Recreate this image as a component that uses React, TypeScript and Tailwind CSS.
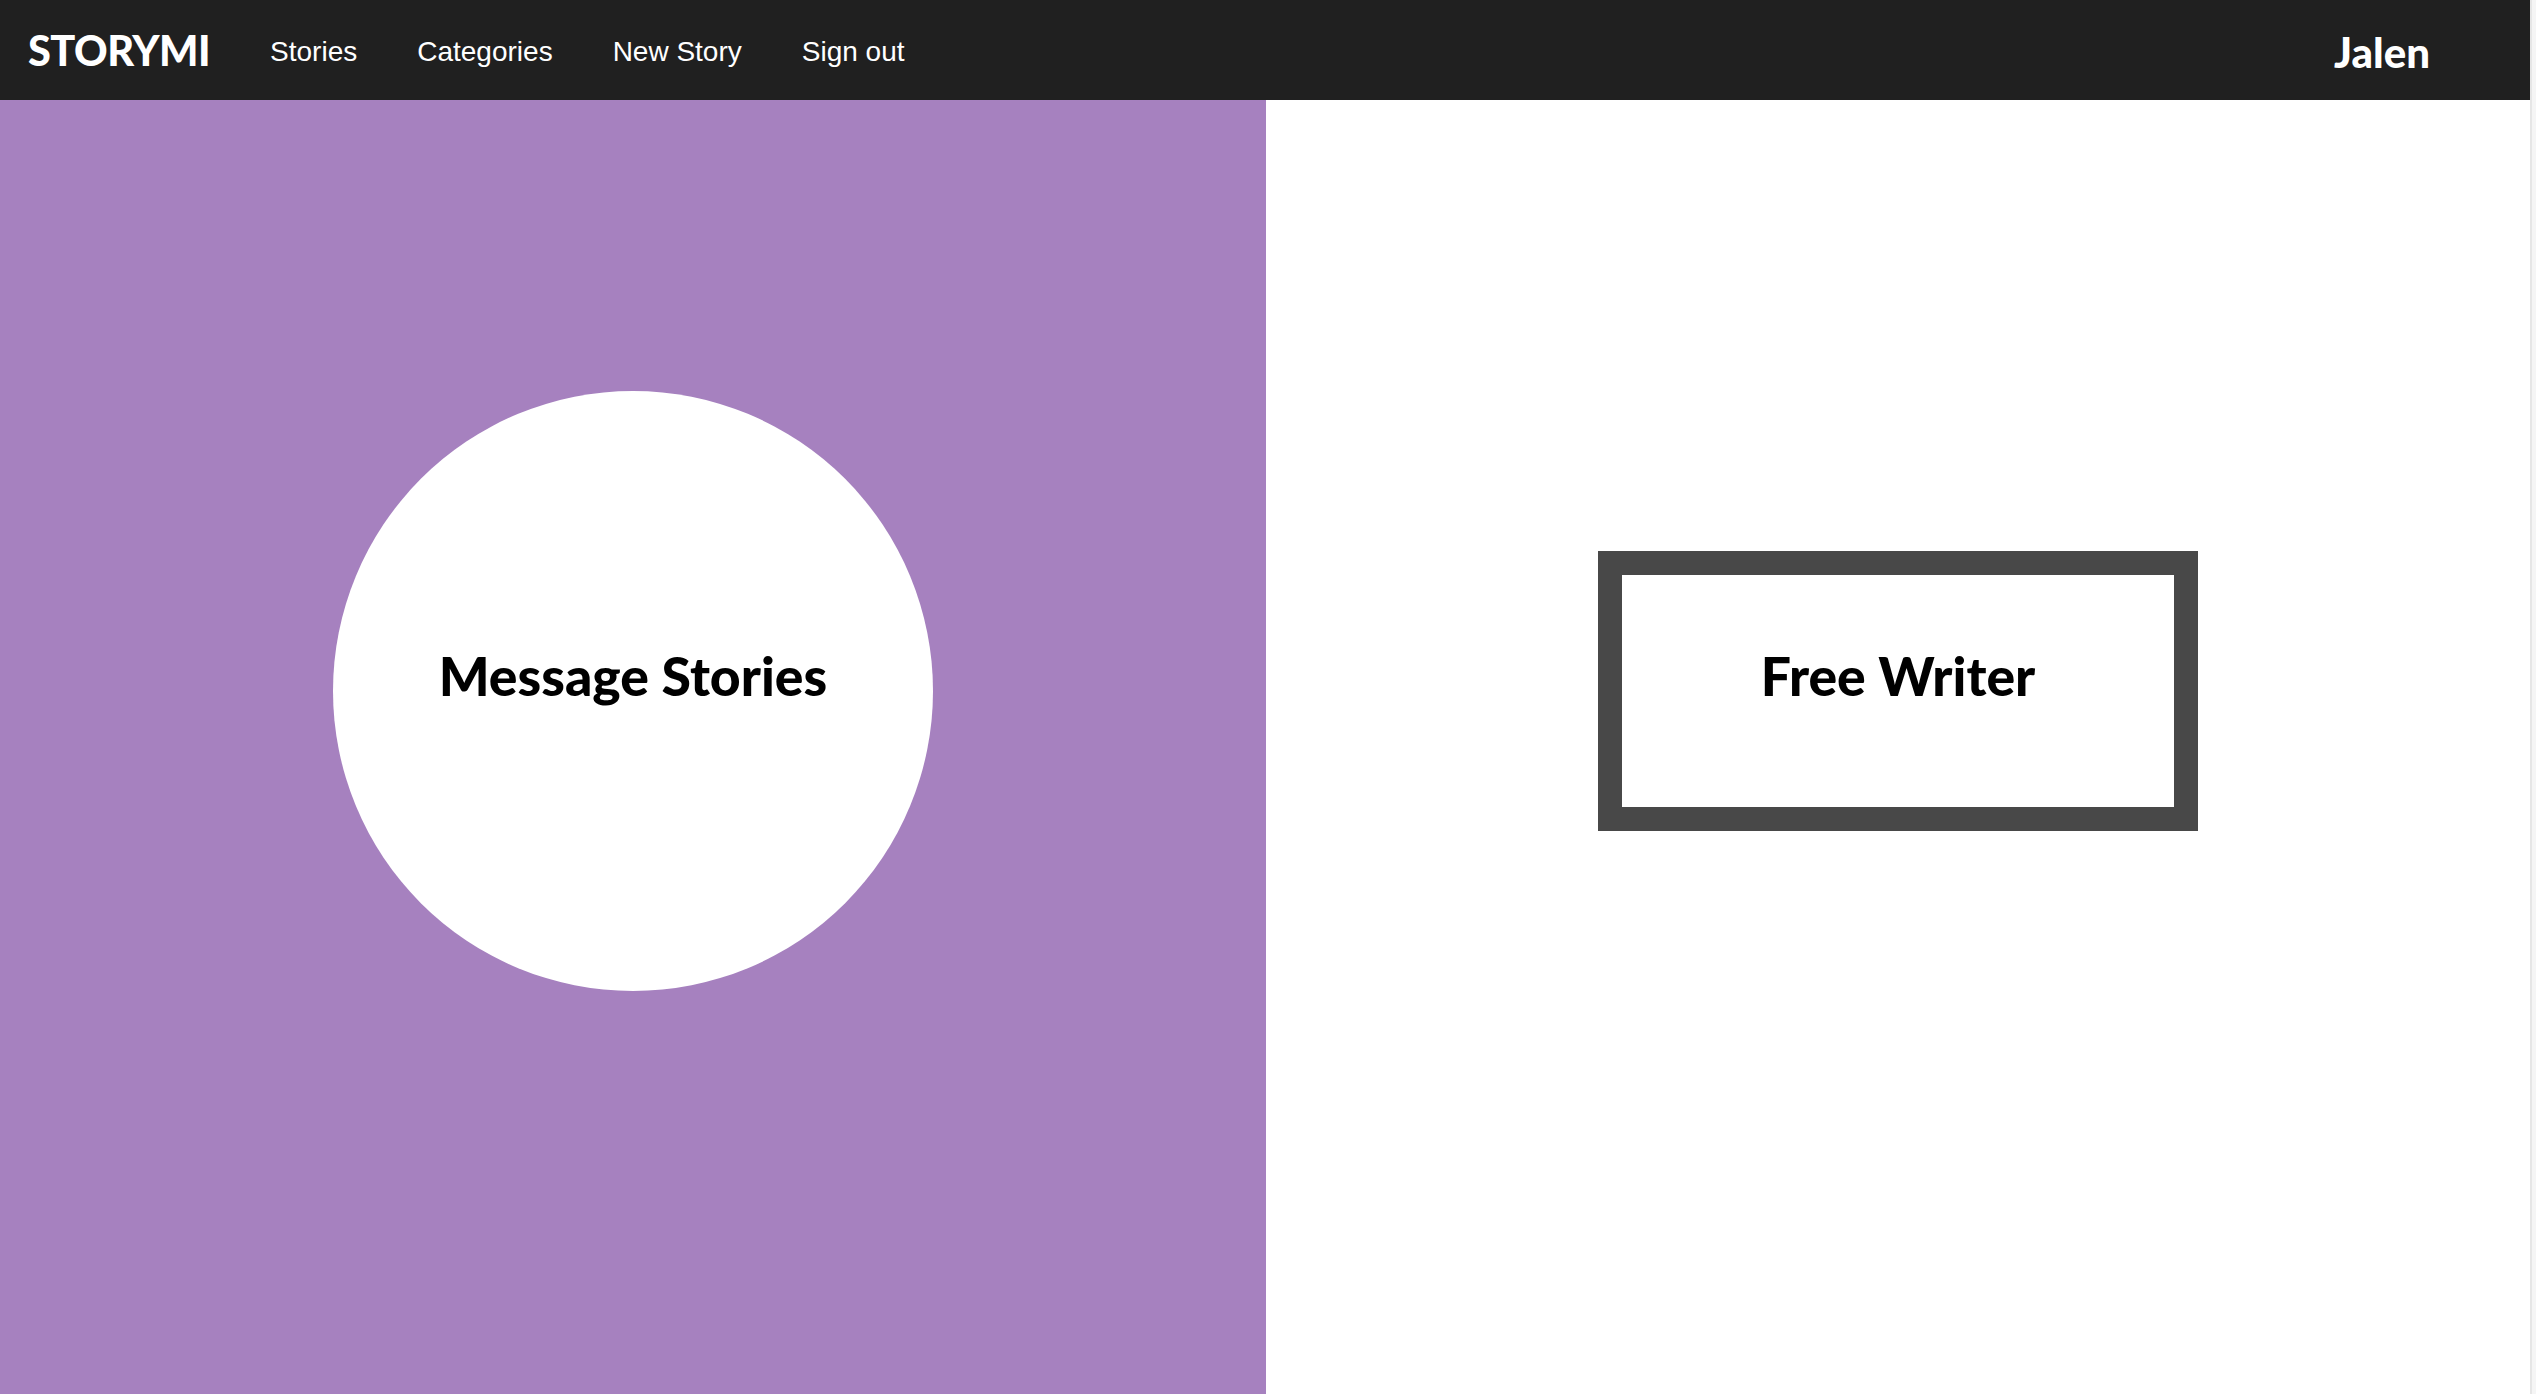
import React from "react";

export default function App() {
  const heading = { fontFamily: "Lato, 'Noto Sans', sans-serif" };
  return (
    <div className="flex h-[1394px] w-full overflow-hidden bg-white">
      <div className="flex flex-1 flex-col">
        <nav className="flex h-[100px] items-center bg-[#202020] pl-[28px] pr-[100px] text-white">
          <div className="pt-[2px] text-[41.5px] font-black leading-none tracking-[-0.5px]" style={heading}>
            STORYMI
          </div>
          <div
            className="ml-[60px] flex items-center gap-[60px] pt-[4px] text-[28px] leading-none"
            style={{ fontFamily: "'Liberation Sans', Arial, sans-serif" }}
          >
            <span>Stories</span>
            <span>Categories</span>
            <span>New Story</span>
            <span>Sign out</span>
          </div>
          <div className="ml-auto pt-[4px] text-[42px] font-black leading-none" style={heading}>
            Jalen
          </div>
        </nav>
        <div className="flex flex-1">
          <div className="flex w-[1266px] justify-center bg-[#a681bf] pt-[291px]">
            <div className="flex h-[600px] w-[600px] items-center justify-center rounded-full bg-white">
              <h1 className="pb-[30px] text-[53.5px] font-black leading-none text-black" style={heading}>
                Message Stories
              </h1>
            </div>
          </div>
          <div className="flex flex-1 justify-center pt-[291px]">
            <div className="flex h-[600px] items-center">
              <div className="flex h-[280px] w-[600px] items-center justify-center border-[24px] border-[#484848] bg-white">
                <h1 className="pb-[30px] text-[53.5px] font-black leading-none text-black" style={heading}>
                  Free Writer
                </h1>
              </div>
            </div>
          </div>
        </div>
      </div>
      <div className="w-[6px] border-l-2 border-[#e6e6e6] bg-[#f5f5f5]" />
    </div>
  );
}
